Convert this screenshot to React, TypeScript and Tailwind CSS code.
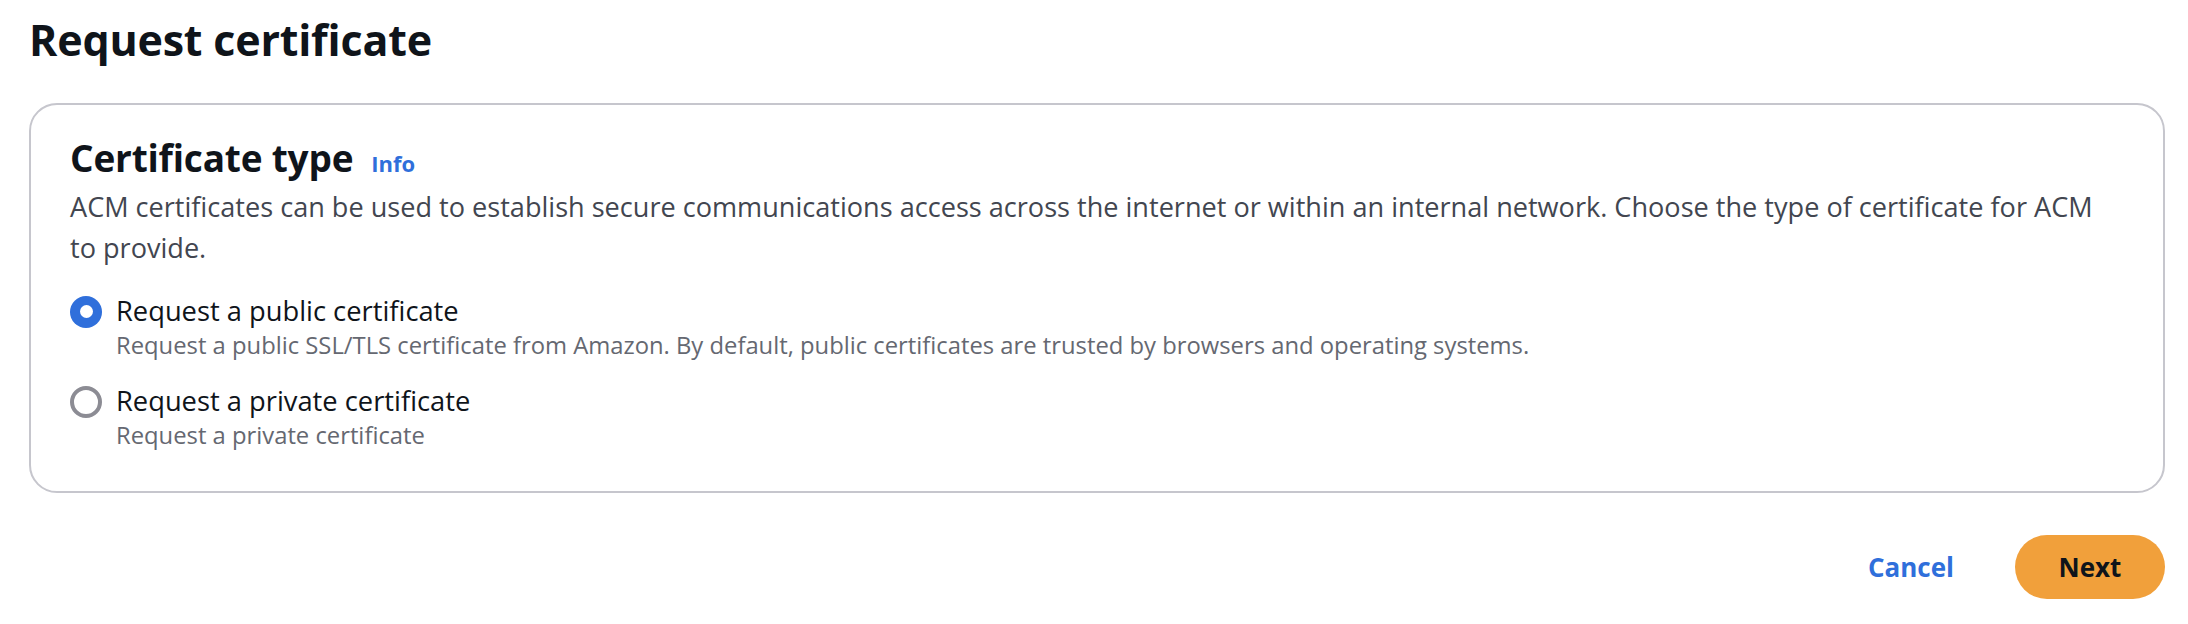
import { useState } from 'react';

// Request certificate — ACM wizard step 1
const OPTIONS = [
  {
    id: 'public',
    label: 'Request a public certificate',
    description:
      'Request a public SSL/TLS certificate from Amazon. By default, public certificates are trusted by browsers and operating systems.',
  },
  {
    id: 'private',
    label: 'Request a private certificate',
    description: 'Request a private certificate',
  },
];

function Radio({ checked }: { checked: boolean }) {
  if (checked) {
    return (
      <span className="mt-[3.5px] flex h-[32px] w-[32px] shrink-0 items-center justify-center rounded-full bg-[#2f6fdb]">
        <span className="h-[13px] w-[13px] rounded-full bg-white" />
      </span>
    );
  }
  return <span className="mt-[3.5px] block h-[32px] w-[32px] shrink-0 rounded-full border-[4px] border-[#8c8c94] bg-white" />;
}

export default function App() {
  const [selected, setSelected] = useState('public');

  return (
    <div className="min-h-screen w-full bg-white pl-[29px] pr-[23px] pt-[14px] font-['Open_Sans','Noto_Sans',sans-serif] text-[#0f141a]">
      <h1 className="text-[43px] font-bold leading-[52px] tracking-[-0.2px]">Request certificate</h1>

      {/* Certificate type container */}
      <div className="mt-[37px] rounded-[28px] border-2 border-[#c6c6cd] pb-[40px] pl-[39px] pr-[45px] pt-[31px]">
        <div className="flex items-baseline gap-[18px]">
          <h2 className="text-[37px] font-bold leading-[44px] tracking-[-0.2px]">Certificate type</h2>
          <a className="text-[22px] font-bold leading-[30px] text-[#2f6fdb]">Info</a>
        </div>
        <p className="mt-[6px] text-[27.1px] leading-[41px] text-[#424650]">
          ACM certificates can be used to establish secure communications access across the internet or within an
          internal network. Choose the type of certificate for ACM to provide.
        </p>

        <div className="mt-[24px] flex flex-col gap-[21px]">
          {OPTIONS.map((o) => (
            <label key={o.id} className="flex cursor-pointer gap-[14px]" onClick={() => setSelected(o.id)}>
              <Radio checked={selected === o.id} />
              <div className="flex flex-col">
                <span className="text-[27.3px] leading-[37px]">{o.label}</span>
                <span className="text-[23.8px] leading-[32px] text-[#656871]">{o.description}</span>
              </div>
            </label>
          ))}
        </div>
      </div>

      {/* Footer actions */}
      <div className="mt-[42px] flex items-center justify-end gap-[61px]">
        <button className="text-[26px] font-bold leading-[36px] text-[#2f6fdb]">Cancel</button>
        <button className="flex h-[64px] w-[150px] items-center justify-center rounded-full bg-[#f1a03b] text-[26px] font-bold text-[#0f141a]">
          Next
        </button>
      </div>
    </div>
  );
}
